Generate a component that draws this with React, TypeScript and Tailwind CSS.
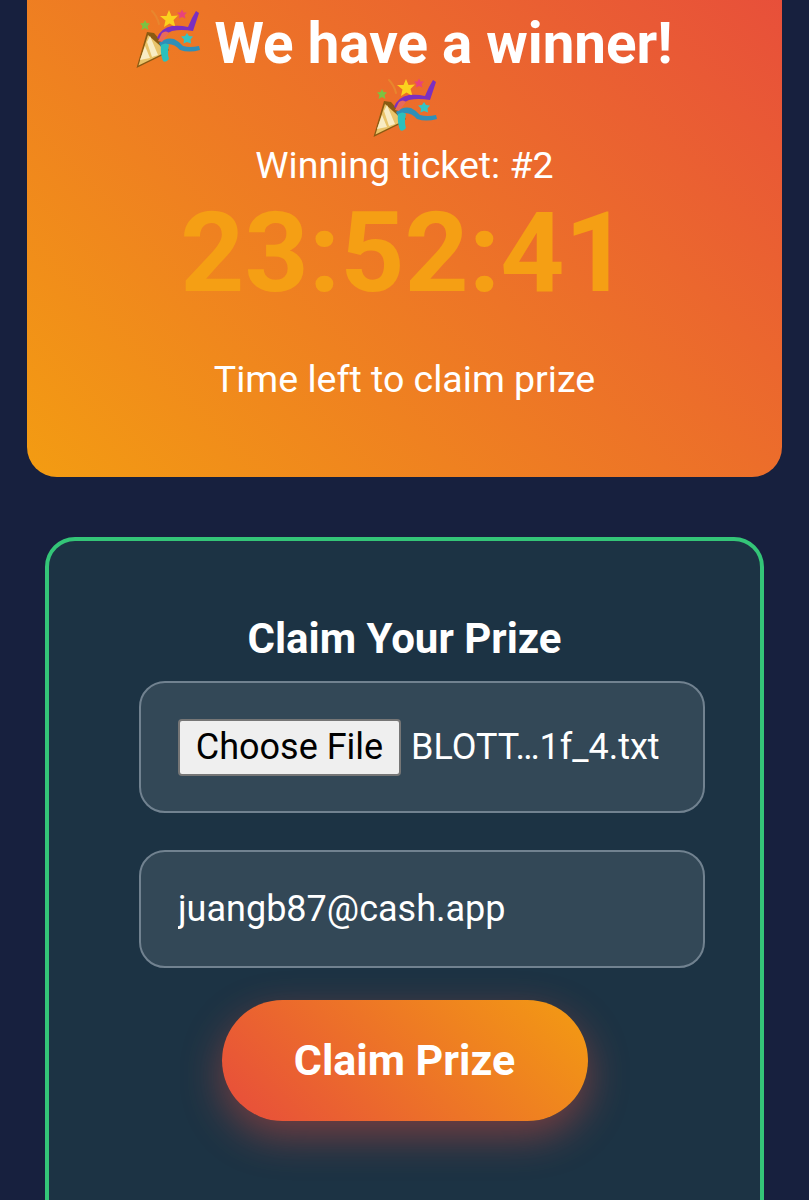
function PartyPopper({ className }: { className?: string }) {
  return (
    <svg viewBox="0 0 64 60" className={className} aria-hidden="true">
      {/* streamer behind the cone */}
      <path d="M16 2 Q21 7 23 15" fill="none" stroke="#e8862e" strokeWidth="2" strokeLinecap="round" />
      {/* stars */}
      <path d="M33 1 L35.5 7 L42 6.5 L37.5 11 L39.5 18 L33.5 14.5 L28 18 L29.5 11.5 L24 7 L30.5 7 Z" fill="#fbd21e" />
      <path d="M46 0.5 L47.5 3.5 L51 3.5 L48.5 6 L49.5 9.5 L46 8 L43 9.5 L43.5 6 L41 3.5 L44.5 3.5 Z" fill="#e8437c" />
      <path d="M9 11 L10.5 14 L14 14.5 L11.5 17 L12.5 21 L9 19 L5.5 21 L6.5 17 L4 14.5 L7.5 14 Z" fill="#7cc242" />
      <path d="M51 24 L53 27 L57 27.5 L54.5 30.5 L55 34.5 L51 33 L47.5 34.5 L48 30.5 L45 27.5 L49 27 Z" fill="#35c4c4" />
      {/* cone */}
      <path d="M0.5 59 L11 23 L18 24 L33 41 L27 46 Z" fill="#8a5a12" />
      <path d="M2.5 56.5 L12 26 L30 42 L26 45 Z" fill="#e9c46a" />
      <path d="M4 51 L9 37 L14 49 Z M11 33 L14 27 L22 46 L16 48 Z" fill="#f8ecc4" />
      {/* ribbons */}
      <path d="M21 29 Q25 19 36 17 Q44 16 52 18 L56 9 L60 2 L63 4 L60 13 L57 22 Q45 20 36 22 Q28 25 25 31 Z" fill="#7b2fc0" />
      <path d="M23 34 Q30 28 38 30 Q44 33 47 37 Q54 39 63 37 L64 41 Q53 44 44 41 Q39 35 32 35 Q28 36 25 38 Z" fill="#2f8fb8" />
      <path d="M25 36 Q30 33 33 36 Q31 44 33 50 Q30 54 27 52 Q24 44 25 36 Z" fill="#2cc0bc" />
      <path d="M26 24 Q30 21 33 24 L26 33 L22 32 Z" fill="#e86a5a" />
    </svg>
  )
}

export default function App() {
  return (
    <div className="h-[1200px] w-[809px] overflow-hidden bg-[#17203e] font-['Roboto',sans-serif] text-white">
      {/* winner card, scrolled partly out of view */}
      <div className="mx-[27px] -mt-[60px] h-[537px] rounded-[30px] bg-[linear-gradient(45deg,#f39c12,#e74c3c)] px-[100px] pt-[69px] text-center">
        <h2 className="text-[56.5px] leading-[67px] font-bold">
          <PartyPopper className="inline-block h-[60px] w-[64px] align-[-6px]" /> We have a winner!{" "}
          <PartyPopper className="inline-block h-[60px] w-[64px] align-[-6px]" />
        </h2>
        <p className="mt-[-4px] text-[37.5px] leading-[44px]">Winning ticket: #2</p>
        <div className="mt-[3px] text-[112px] leading-[126px] font-bold text-[#f59f14]">23:52:41</div>
        <p className="mt-[41px] text-[37.5px] leading-[44px]">Time left to claim prize</p>
      </div>

      {/* claim form */}
      <div className="mx-[45px] mt-[60px] h-[700px] rounded-[30px] border-4 border-[#34c578] bg-[#1c3344] pt-[72px]">
        <h3 className="text-center text-[42px] leading-[52px] font-bold">Claim Your Prize</h3>
        <div className="mt-[16px] ml-[90px] flex w-[566px] flex-col">
          <div className="flex h-[132px] items-center gap-[10px] rounded-[26px] border-2 border-[#718290] bg-[#334857] pl-[37px]">
            <button className="flex h-[57px] w-[223px] items-center justify-center rounded-[4px] border-2 border-[#767676] bg-[#efefef] text-[36px] text-black">
              Choose File
            </button>
            <span className="text-[36px] whitespace-nowrap">BLOTT…1f_4.txt</span>
          </div>
          <input
            readOnly
            value="juangb87@cash.app"
            className="mt-[37px] h-[118px] rounded-[26px] border-2 border-[#718290] bg-[#334857] pl-[37px] text-[36px] outline-none"
          />
        </div>
        <button className="mx-auto mt-[32px] block h-[121px] w-[366px] rounded-full bg-[linear-gradient(45deg,#e74c3c,#f39c12)] text-[43px] font-bold shadow-[0_15px_40px_rgba(231,76,60,0.45)]">
          Claim Prize
        </button>
      </div>
    </div>
  )
}
